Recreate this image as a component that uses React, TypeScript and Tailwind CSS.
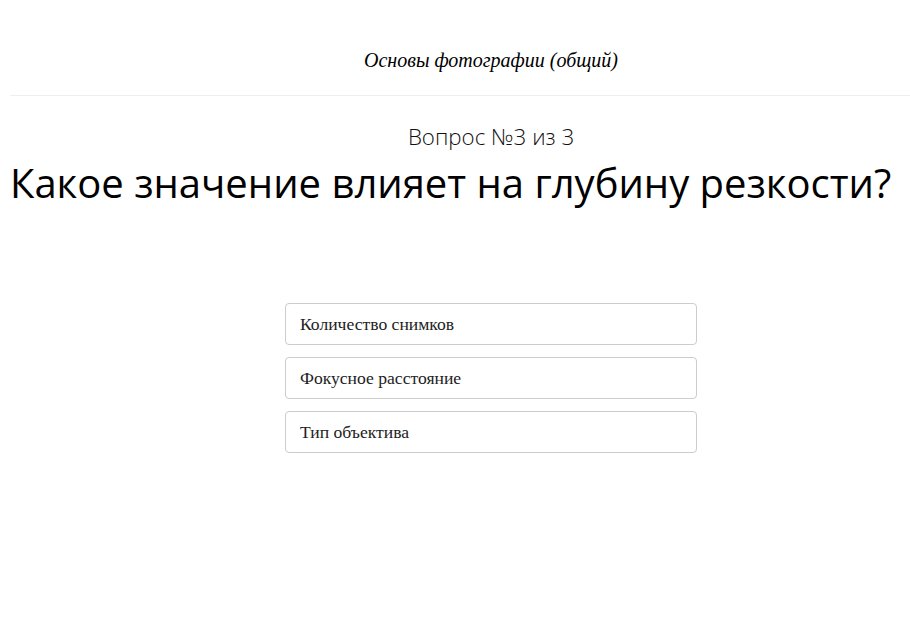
export default function App() {
  const options = ['Количество снимков', 'Фокусное расстояние', 'Тип объектива'];

  return (
    <div className="w-full min-h-screen bg-white overflow-x-hidden">
      <div className="ml-[10px] w-[962px]">
        {/* шапка */}
        <div className="h-[96px] pt-[46px] flex justify-center border-b border-[#eeeeee]">
          <h1 className="text-[20px] leading-[28px] italic text-black" style={{ fontFamily: '"Liberation Serif", serif' }}>
            Основы фотографии (общий)
          </h1>
        </div>

        <div style={{ fontFamily: '"Open Sans", sans-serif' }}>
          <p className="text-center text-[22.3px] font-light text-[#111] mt-[26px] leading-[30px]">Вопрос №3 из 3</p>
          <h2 className="text-[40px] text-black leading-[54px] mt-[4px]">Какое значение влияет на глубину резкости?</h2>
        </div>

        <div className="flex flex-col items-center gap-[12px] mt-[93px]" style={{ fontFamily: '"Liberation Serif", serif' }}>
          {options.map((o) => (
            <button
              key={o}
              className="w-[412px] h-[42px] text-left px-[14px] border border-[#cccccc] rounded-[4px] bg-white text-[17.6px] text-[#222]"
            >
              {o}
            </button>
          ))}
        </div>
      </div>
    </div>
  );
}
